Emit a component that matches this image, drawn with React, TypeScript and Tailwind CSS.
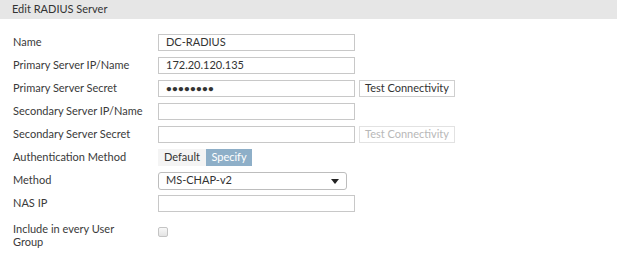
import React from "react";

const font = { fontFamily: "Lato, 'Open Sans', sans-serif" };

function Row({ label, children }: { label: string; children?: React.ReactNode }) {
  return (
    <div className="flex h-[23px] items-center">
      <div className="w-[145px] shrink-0 text-[11px] text-[#3a3a3a]">{label}</div>
      {children}
    </div>
  );
}

function Input({ value, dots }: { value?: string; dots?: boolean }) {
  return (
    <div className="flex h-[17px] w-[197px] items-center border border-[#c8c8c8] bg-white px-[7px] text-[11px] text-[#333]">
      {dots ? <span className="text-[10px] font-bold tracking-[0.2px]">••••••••</span> : value}
    </div>
  );
}

function TestBtn({ disabled }: { disabled?: boolean }) {
  return (
    <div
      className={
        "ml-[4px] flex h-[17px] w-[96px] items-center justify-center border bg-white text-[11px] " +
        (disabled ? "border-[#e2e2e2] text-[#b8b8b8]" : "border-[#cfcfcf] text-[#333]")
      }
    >
      Test Connectivity
    </div>
  );
}

export default function App() {
  return (
    <div className="h-[254px] w-[617px] bg-white" style={font}>
      <div className="flex h-[19px] items-center bg-[#e6e6e6] pl-[12px] text-[11px] text-[#333]">
        Edit RADIUS Server
      </div>
      <div className="pl-[13px] pt-[12px]">
        <Row label="Name">
          <Input value="DC-RADIUS" />
        </Row>
        <Row label="Primary Server IP/Name">
          <Input value="172.20.120.135" />
        </Row>
        <Row label="Primary Server Secret">
          <Input dots />
          <TestBtn />
        </Row>
        <Row label="Secondary Server IP/Name">
          <Input />
        </Row>
        <Row label="Secondary Server Secret">
          <Input />
          <TestBtn disabled />
        </Row>
        <Row label="Authentication Method">
          <div className="flex h-[17px] text-[11px]">
            <div className="flex w-[48px] items-center justify-center bg-[#f4f4f4] text-[#333]">Default</div>
            <div className="flex w-[46px] items-center justify-center bg-[#8eafc8] text-white">Specify</div>
          </div>
        </Row>
        <Row label="Method">
          <div className="relative flex h-[18px] w-[189px] items-center rounded-[3px] border border-[#bdbdbd] bg-white px-[7px] text-[11px] text-[#333]">
            MS-CHAP-v2
            <svg className="absolute right-[7px] top-[6px]" width="8" height="5" viewBox="0 0 8 5">
              <path d="M0 0 H8 L4 5 Z" fill="#222" />
            </svg>
          </div>
        </Row>
        <Row label="NAS IP">
          <Input />
        </Row>
        <div className="flex items-start pt-[7px]">
          <div className="w-[125px] shrink-0 text-[11px] leading-[13px] text-[#3a3a3a]">Include in every User Group</div>
          <div className="ml-[20px] mt-[5px] h-[10px] w-[10px] rounded-[2px] border border-[#c4c4c4] bg-gradient-to-b from-[#f8f8f8] to-[#e4e4e4]" />
        </div>
      </div>
    </div>
  );
}
